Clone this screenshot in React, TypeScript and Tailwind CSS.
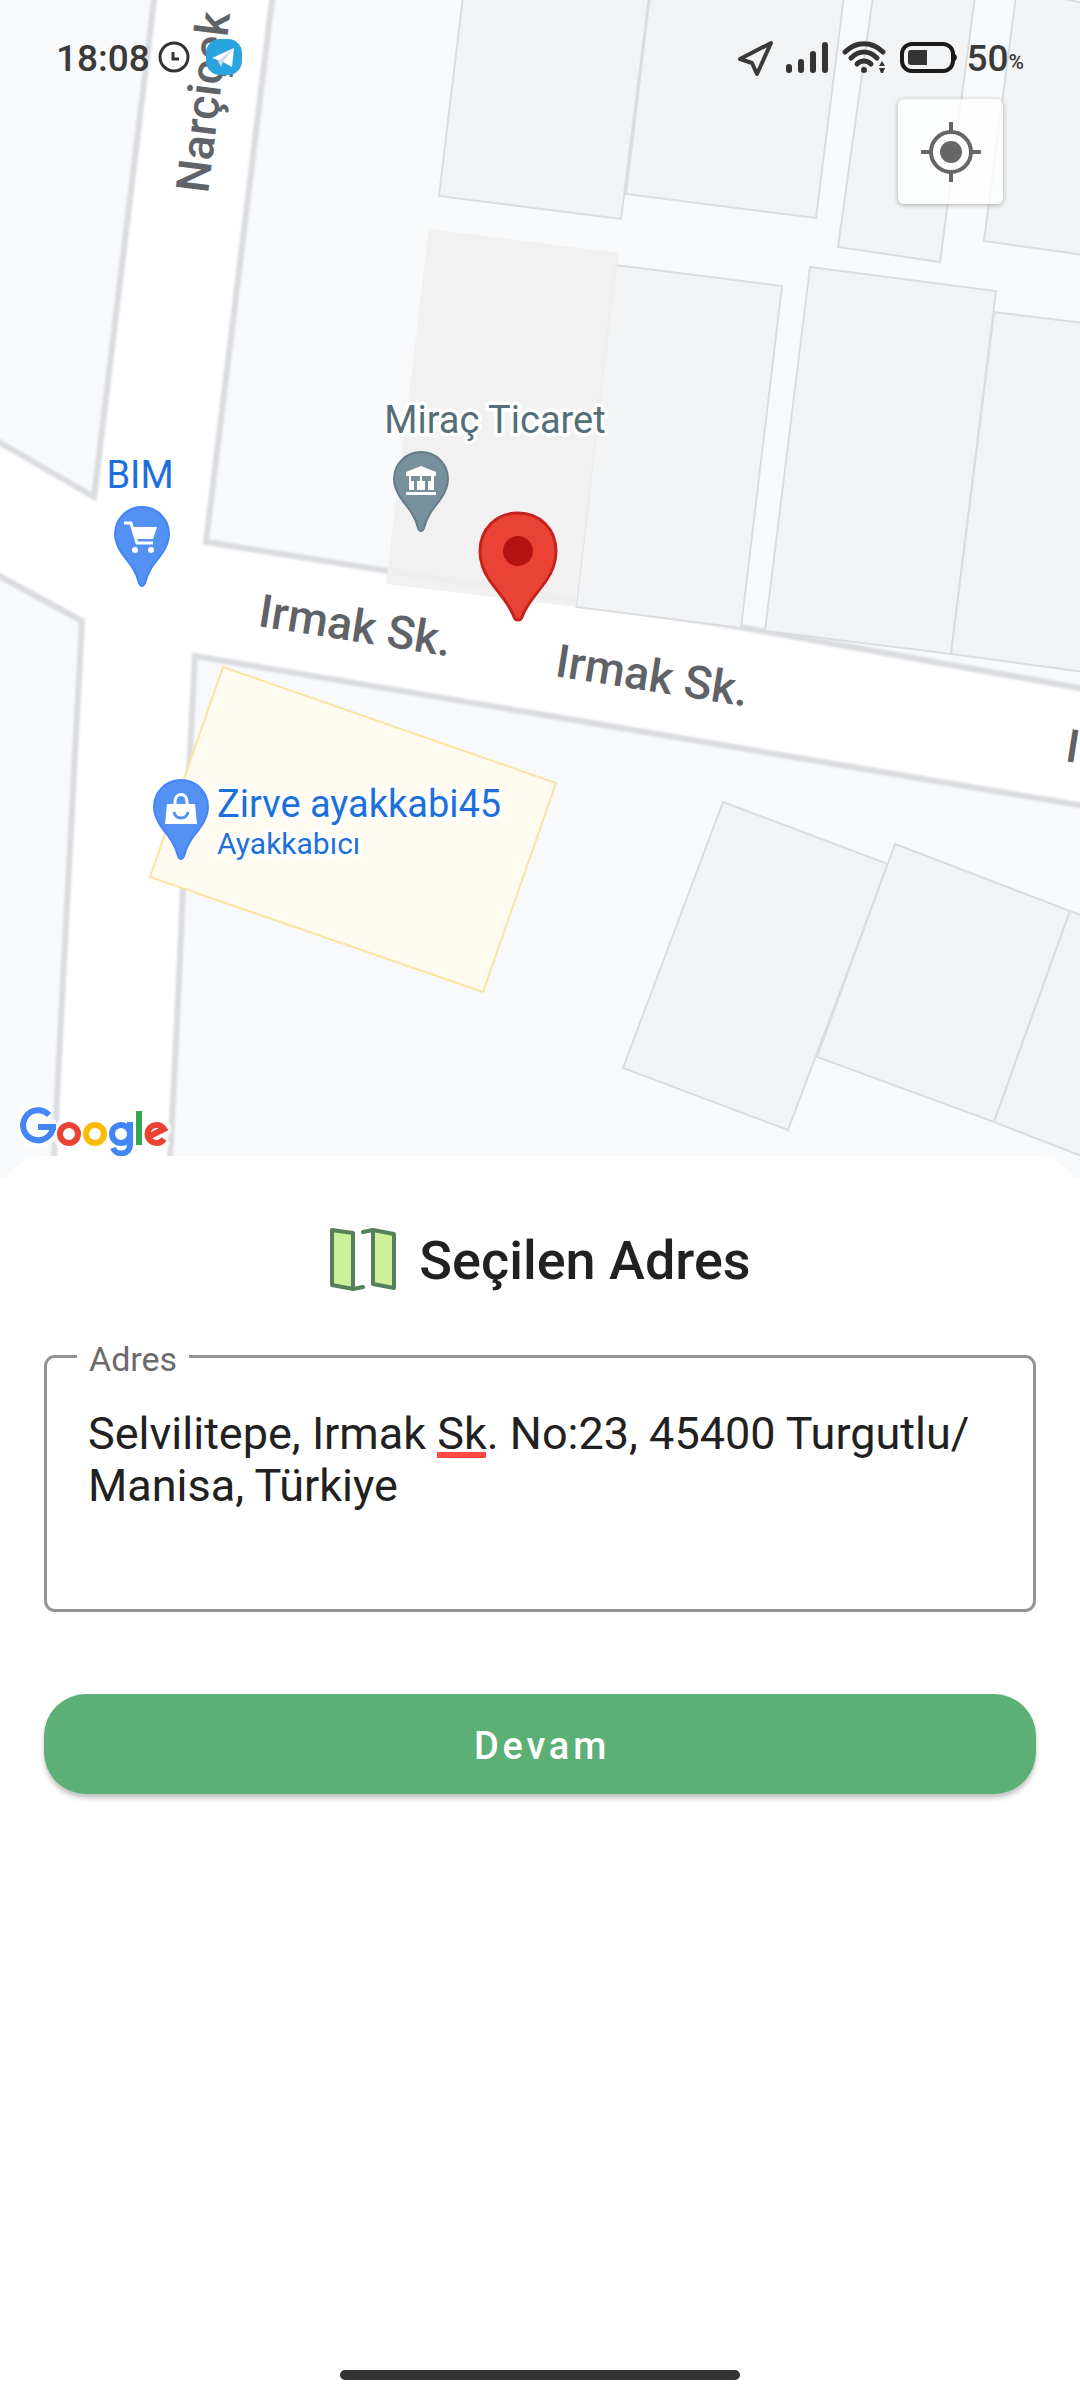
import React, { useState } from "react";

const BUILDINGS = [
  "463,-4 439,196 621,219 649,-4",
  "650,-4 626,194 816,218 844,-4",
  "873,-4 838,247 940,262 975,-4",
  "1016,-4 984,241 1084,255 1084,3 1050,-4",
  "615,265 782,286 741,628 576,607",
  "810,267 996,291 951,654 765,631",
  "994,312 1084,323 1084,672 951,654",
  "723,802 888,864 788,1130 623,1068",
  "895,844 1070,911 994,1122 817,1057",
  "1070,911 1084,916 1084,1157 994,1122",
];

const SMALL_PIN =
  "M0 -27C-15 -27 -27 -15 -27 0C-27 8 -24 14 -19 21C-11 31 -6 37 -3 49Q-2 52 0 52Q2 52 3 49C6 37 11 31 19 21C24 14 27 8 27 0C27 -15 15 -27 0 -27Z";

function MapCanvas() {
  return (
    <svg
      className="block size-full"
      viewBox="0 0 1080 1178"
      preserveAspectRatio="xMidYMin slice"
      role="img"
      aria-label="Harita"
    >
      <defs>
        <filter id="soft" x="-5%" y="-5%" width="110%" height="110%">
          <feGaussianBlur stdDeviation="1" />
        </filter>
      </defs>
      <rect width="1080" height="1178" fill="#f8f9fb" />
      <path
        d="M154 0L94 497L0 442V576L82 621L54 1178H170L183 888L195 656L580 721L1080 805V688L740 629L206 542L272 0Z"
        fill="#fff"
      />
      <g fill="none" stroke="#dadce0" strokeWidth="6" filter="url(#soft)">
        <path d="M155 -8L94 497L-8 438" />
        <path d="M273 -8L206 542L740 627L1090 690" />
        <path d="M-8 572L82 621L62 1000L53 1180" />
        <path d="M1090 807L580 721L195 656L183 888L178 1000L169 1180" />
      </g>
      <g fill="#f1f3f4" stroke="#dadce0" strokeWidth="2">
        {BUILDINGS.map((points) => (
          <polygon key={points} points={points} />
        ))}
      </g>
      <polygon points="429,229 619,253 576,607 386,584" fill="#efefef" opacity="0.9" />
      <polygon points="223,667 556,783 483,992 150,877" fill="#fffbf0" stroke="#fbe3a2" strokeWidth="2" />

      <g fill="#5f6368" fontFamily="Roboto, sans-serif" fontSize="46" fontWeight="500">
        <text transform="translate(208 194) rotate(-83)">Narçiçek</text>
        <text transform="translate(257 626) rotate(9)">Irmak Sk.</text>
        <text transform="translate(554 676) rotate(9)">Irmak Sk.</text>
        <text transform="translate(1064 761) rotate(9)">I</text>
      </g>

      <g
        fontFamily="Roboto, sans-serif"
        fontSize="38"
        stroke="#fff"
        strokeWidth="7"
        strokeLinejoin="round"
        paintOrder="stroke"
      >
        <text x="140" y="488" textAnchor="middle" fill="#1d70dc">BIM</text>
        <text x="495" y="433" textAnchor="middle" fill="#546e7a">Miraç Ticaret</text>
        <text x="217" y="817" fill="#1d70dc">Zirve ayakkabi45</text>
        <text x="217" y="854" fontSize="30" fill="#1d70dc">Ayakkabıcı</text>
      </g>

      <g transform="translate(142 534)">
        <path d={SMALL_PIN} fill="#5491f5" stroke="#4285f4" strokeWidth="2" />
        <path d="M-18 -11H-11L-5 9H11" fill="none" stroke="#fff" strokeWidth="3" />
        <path d="M-9 -7H15L11 5H-6Z" fill="#fff" />
        <circle cx="-7" cy="16" r="3" fill="#fff" />
        <circle cx="9" cy="16" r="3" fill="#fff" />
      </g>
      <g transform="translate(421 479)">
        <path d={SMALL_PIN} fill="#78909c" stroke="#607d89" strokeWidth="2" />
        <path d="M-15 -7L0 -13L15 -7V-3H-15ZM-12 -3H13V11H-12ZM-15 13H15V16H-15Z" fill="#fff" />
        <path d="M-10 -3H-1V2H-4V11H-7V2H-10ZM1 -3H10V2H7V11H4V2H1Z" fill="#78909c" />
      </g>
      <g transform="translate(181 807)">
        <path d={SMALL_PIN} fill="#5491f5" stroke="#4285f4" strokeWidth="2" />
        <path d="M-14 -3H14L16 17H-16Z" fill="#fff" />
        <path d="M-6 -2V-5C-6 -15 6 -15 6 -5V-2" fill="none" stroke="#fff" strokeWidth="3" />
        <path d="M-7 5C-6 13 6 13 7 5" fill="none" stroke="#5491f5" strokeWidth="3" />
      </g>
      <g transform="translate(518 551)">
        <path
          d="M0 -38C-22 -38 -38 -22 -38 0C-38 11 -35 20 -28 30C-18 44 -9 52 -4 66Q-3 69 0 69Q3 69 4 66C9 52 18 44 28 30C35 20 38 11 38 0C38 -22 22 -38 0 -38Z"
          fill="#ea4335"
          stroke="#c5221f"
          strokeWidth="3"
        />
        <circle r="15" fill="#b31412" />
      </g>
    </svg>
  );
}

function GoogleLogo() {
  const strokes = [
    { color: "#4285f4", d: "M35 13A15 15 0 1 0 39 25M24 25H42" },
    { color: "#ea4335", d: "M46 32A9 9 0 1 0 64 32A9 9 0 1 0 46 32" },
    { color: "#fbbc05", d: "M72 32A9 9 0 1 0 90 32A9 9 0 1 0 72 32" },
    { color: "#4285f4", d: "M98 32A9 9 0 1 0 116 32A9 9 0 1 0 98 32M116 20V42C116 54 102 54 99 46" },
    { color: "#34a853", d: "M125 9V43" },
    { color: "#ea4335", d: "M150 37A9 9 0 1 1 150 27L136 34" },
  ];
  return (
    <svg className="h-[56px] w-[160px]" viewBox="0 0 160 56" role="img" aria-label="Google">
      <g fill="none" stroke="#fff" strokeWidth="15" strokeOpacity="0.7" strokeLinejoin="round">
        <path d={strokes.map((s) => s.d).join("")} />
      </g>
      <g fill="none" strokeWidth="6">
        {strokes.map((s, i) => (
          <path key={i} d={s.d} stroke={s.color} />
        ))}
      </g>
    </svg>
  );
}

function StatusBar() {
  return (
    <div className="absolute inset-x-0 top-0 flex h-[113px] items-center justify-between px-14 font-medium text-[#3a3a3a]">
      <div className="flex items-center gap-2">
        <span className="mt-1 text-[37px] leading-none">18:08</span>
        <svg className="size-8" viewBox="0 0 32 32" fill="none" stroke="#333" aria-hidden="true">
          <circle cx="16" cy="16" r="14" strokeWidth="3" />
          <path d="M15 11V18H21" strokeWidth="3" />
        </svg>
        <svg className="ml-2 size-9" viewBox="0 0 36 36" aria-hidden="true">
          <rect width="36" height="36" rx="14" fill="#29a4df" />
          <path d="M6 19L28 9L26 28L17 23Z" fill="#fff" />
          <path d="M12 22L28 9L17 23L15 28Z" fill="#d2dbe4" />
        </svg>
      </div>
      <div className="flex items-center">
        <svg className="h-10 w-[221px]" viewBox="0 0 221 40" fill="none" aria-hidden="true">
          <path d="M34 6L3 22L15 26L20 37Z" stroke="#3a3a3a" strokeWidth="4" strokeLinejoin="round" />
          <path
            d="M52 30V33M64 25V33M76 17V33M88 8V33"
            stroke="#333"
            strokeWidth="6"
            strokeLinecap="round"
          />
          <path
            d="M108 15C119 4 135 4 146 15M114 21C122 13 132 13 140 21M120 27C124 23 130 23 134 27"
            stroke="#333"
            strokeWidth="5"
            strokeLinecap="round"
          />
          <circle cx="127" cy="33" r="3" fill="#333" />
          <path d="M145 24L148 29H142ZM142 31H148L146 36H144Z" fill="#333" />
          <rect x="165" y="7" width="51" height="27" rx="10" stroke="#1a1a1a" strokeWidth="4" />
          <path d="M174 13H190V28H174Q171 28 171 25V16Q171 13 174 13Z" fill="#333" />
          <path d="M217 16Q223 20 217 25Z" fill="#1a1a1a" />
        </svg>
        <span className="mt-1 ml-2 text-[37px] leading-none">50</span>
        <span className="mt-3 text-[21px] leading-none">%</span>
      </div>
    </div>
  );
}

export default function App() {
  const [address, setAddress] = useState(
    "Selvilitepe, Irmak Sk. No:23, 45400 Turgutlu/\nManisa, Türkiye",
  );
  return (
    <div className="flex min-h-screen flex-col bg-white font-['Roboto',sans-serif] text-[#212121]">
      <section className="relative h-[1178px] shrink-0 overflow-hidden">
        <MapCanvas />
        <StatusBar />
        <button
          type="button"
          aria-label="Konumum"
          className="absolute top-[99px] right-[77px] flex size-[105px] items-center justify-center rounded-md bg-white/80 shadow-[0_1px_5px_rgba(0,0,0,0.3)]"
        >
          <svg className="size-[60px]" viewBox="0 0 60 60" fill="none" stroke="#666" strokeWidth="4" aria-hidden="true">
            <circle cx="30" cy="30" r="20" />
            <circle cx="30" cy="30" r="11" fill="#666" stroke="none" />
            <path d="M30 0V9M30 51V60M0 30H9M51 30H60" />
          </svg>
        </button>
        <div className="absolute bottom-5 left-[14px]">
          <GoogleLogo />
        </div>
      </section>

      <main className="relative -mt-[22px] flex grow flex-col rounded-t-[45px] bg-white px-11">
        <h1 className="mt-[70px] flex items-center justify-center gap-[22px] text-[54px] leading-[70px] font-medium">
          <svg className="mb-1 h-16 w-[68px]" viewBox="0 0 68 64" aria-hidden="true">
            <g fill="#cdf09b" stroke="#55805b" strokeWidth="4" strokeLinejoin="round" strokeLinecap="round">
              <path d="M3 3L24 6V62L3 58Z" />
              <path d="M44 3L65 7V61L44 57Z" />
              <path d="M24 62L34 60M34 5L44 3" fill="none" />
            </g>
          </svg>
          Seçilen Adres
        </h1>

        <div className="relative mt-[59px] h-[257px] rounded-[11px] border-3 border-[#939393]">
          <label
            htmlFor="address"
            className="absolute -top-[19px] left-[30px] bg-white px-3 text-[34px] leading-10 text-[#6b6b6b]"
          >
            Adres
          </label>
          <textarea
            id="address"
            value={address}
            onChange={(e) => setAddress(e.target.value)}
            spellCheck={false}
            className="block size-full resize-none overflow-hidden bg-transparent px-[41px] pt-[50px] text-[45px] leading-[52px] outline-none"
          />
          <span className="absolute top-[94px] left-[390px] h-[6px] w-[49px] bg-[#ff4a44]" aria-hidden="true" />
        </div>

        <button
          type="button"
          className="mt-[82px] h-[100px] w-full rounded-[42px] bg-[#5db075] pt-1 pl-1 text-[38px] font-medium tracking-widest text-white shadow-[0_4px_5px_rgba(0,0,0,0.25)]"
        >
          Devam
        </button>

        <div className="mx-auto mt-auto mb-5 h-[10px] w-[400px] rounded-full bg-[#333]" />
      </main>
    </div>
  );
}
